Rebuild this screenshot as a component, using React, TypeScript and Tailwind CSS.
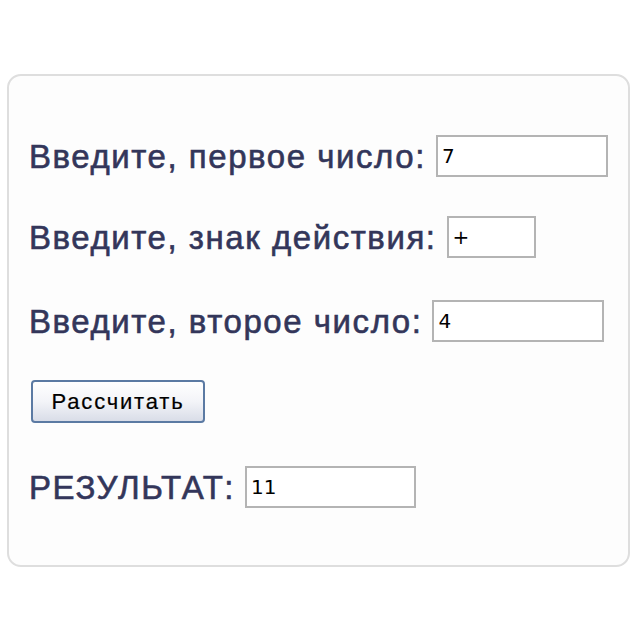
export default function App() {
  const label =
    "text-[33px] leading-none tracking-[1.55px] text-[#33365a] [-webkit-text-stroke:0.6px_#33365a] [font-family:'Liberation_Sans',Arial,sans-serif]";
  const field =
    "h-[42px] border-2 border-[#b4b4b4] bg-white px-[4px] text-[20px] text-black outline-none [font-family:'DejaVu_Sans',sans-serif]";

  return (
    <div className="h-[640px] w-[640px] bg-white pl-[7px] pt-[74px]">
      <div className="flex h-[493px] w-[623px] flex-col rounded-[14px] border-2 border-[#dedede] bg-[#fdfdfd] pl-[20px] pt-[59px]">
        {/* первое число */}
        <div className="flex h-[42px] items-center gap-[10px]">
          <span className={label}>Введите, первое число:</span>
          <input className={`${field} w-[172px]`} defaultValue="7" />
        </div>

        {/* знак */}
        <div className="mt-[39px] flex h-[42px] items-center gap-[10px]">
          <span className={label}>Введите, знак действия:</span>
          <input className={`${field} w-[89px]`} defaultValue="+" />
        </div>

        {/* второе число */}
        <div className="mt-[42px] flex h-[42px] items-center gap-[10px]">
          <span className={label}>Введите, второе число:</span>
          <input className={`${field} w-[172px]`} defaultValue="4" />
        </div>

        <div className="mt-[38px]">
          <button className="ml-[2px] h-[43px] w-[174px] rounded-[4px] border-2 border-[#5b7aa3] bg-gradient-to-b from-white via-[#f3f4f8] to-[#d9dde8] text-[22px] tracking-[1.8px] text-black [-webkit-text-stroke:0.2px_#000] [font-family:'Liberation_Sans',Arial,sans-serif]">
            Рассчитать
          </button>
        </div>

        {/* результат */}
        <div className="mt-[43px] flex h-[42px] items-center gap-[10px]">
          <span className={label}>РЕЗУЛЬТАТ:</span>
          <input className={`${field} w-[171px]`} defaultValue="11" />
        </div>
      </div>
    </div>
  );
}
